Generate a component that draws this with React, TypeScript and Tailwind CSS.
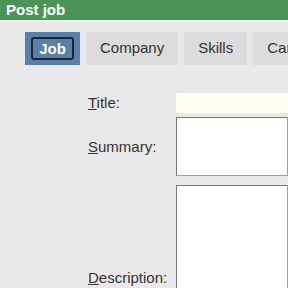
import React from 'react';

const tabs = ['Company', 'Skills', 'Career'];

function Label({ accel, rest }: { accel: string; rest: string }) {
  return (
    <label className="w-[88px] shrink-0 text-[15px] leading-[18px] text-[#333]">
      <span className="underline">{accel}</span>
      {rest}:
    </label>
  );
}

export default function App() {
  return (
    <div className="w-[288px] h-[288px] overflow-hidden bg-[#e9e9e9] font-['Liberation_Sans',Arial,sans-serif]">
      <div className="h-[20px] bg-[#4b9457] border-b-2 border-[#f2f2f2] box-content pl-[6px] text-[15px] font-bold leading-[20px] text-white">
        Post job
      </div>

      {/* tab strip */}
      <div className="flex gap-[6px] pl-[25px] mt-[10px] whitespace-nowrap">
        <div className="h-[33px] w-[55px] shrink-0 bg-[#5a7fa8] flex items-center justify-center">
          <button className="h-[23px] px-[6px] rounded-[3px] border-2 border-[#1d2633] text-[15px] font-bold text-white leading-none">
            Job
          </button>
        </div>
        {tabs.map((t) => (
          <div
            key={t}
            className="h-[33px] shrink-0 bg-[#dcdcdc] px-[14px] flex items-center text-[15px] text-[#333]"
          >
            {t}
          </div>
        ))}
      </div>

      {/* form */}
      <div className="flex flex-col pl-[88px] mt-[28px] gap-[4px]">
        <div className="flex items-center h-[20px]">
          <Label accel="T" rest="itle" />
          <input className="block h-[20px] w-[200px] bg-[#fffff0] outline-none" />
        </div>
        <div className="flex items-center">
          <Label accel="S" rest="ummary" />
          <textarea className="block h-[59px] w-[200px] bg-white border border-[#a0a0a0] border-t-[#767676] border-l-[#767676] resize-none" />
        </div>
        <div className="flex items-center mt-[5px]">
          <Label accel="D" rest="escription" />
          <textarea className="block h-[186px] w-[200px] bg-white border border-[#a0a0a0] border-t-[#767676] border-l-[#767676] resize-none" />
        </div>
      </div>
    </div>
  );
}
